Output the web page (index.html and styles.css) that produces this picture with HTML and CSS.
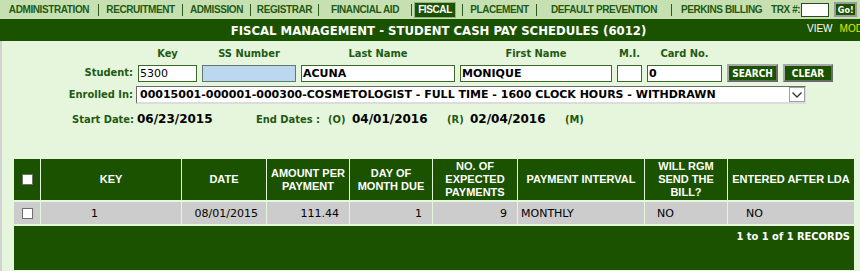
FILE: index.html
```html
<!DOCTYPE html>
<html>
<head>
<meta charset="utf-8">
<title>Fiscal Management - Student Cash Pay Schedules</title>
<link rel="stylesheet" href="styles.css">
</head>
<body>
<div class="nav">
  <div class="nav-item first">ADMINISTRATION</div>
  <div class="nav-item">RECRUITMENT</div>
  <div class="nav-item">ADMISSION</div>
  <div class="nav-item">REGISTRAR</div>
  <div class="nav-item">FINANCIAL AID</div>
  <div class="nav-item fiscal"><span class="tab">FISCAL</span></div>
  <div class="nav-item">PLACEMENT</div>
  <div class="nav-item">DEFAULT PREVENTION</div>
  <div class="nav-item">PERKINS BILLING</div>
  <div class="trx"><span class="trx-label">TRX #:</span><input class="trx-input" type="text"><button class="go">Go!</button></div>
</div>
<div class="titlebar">
  <div class="title">FISCAL MANAGEMENT - STUDENT CASH PAY SCHEDULES (6012)</div>
  <div class="mode"><span>VIEW</span><span class="mod">MOD</span></div>
</div>
<div class="main">
  <div class="form">
    <div></div>
    <div class="colhead">Key</div>
    <div class="colhead">SS Number</div>
    <div class="colhead">Last Name</div>
    <div class="colhead">First Name</div>
    <div class="colhead">M.I.</div>
    <div class="colhead">Card No.</div>
    <div></div>
    <div></div>

    <div class="label">Student:</div>
    <input class="field" type="text" value="5300">
    <input class="field ssn" type="text" value="">
    <input class="field bold" type="text" value="ACUNA">
    <input class="field bold" type="text" value="MONIQUE">
    <input class="field" type="text" value="">
    <input class="field bold" type="text" value="0">
    <button class="btn">SEARCH</button>
    <button class="btn">CLEAR</button>

    <div class="label">Enrolled In:</div>
    <div class="select">
      <span class="select-text">00015001-000001-000300-COSMETOLOGIST - FULL TIME - 1600 CLOCK HOURS - WITHDRAWN</span>
      <span class="arrow"><svg width="12" height="8" viewBox="0 0 12 8"><polyline points="1.5,1.5 6,6 10.5,1.5" fill="none" stroke="#333" stroke-width="1.3"/></svg></span>
    </div>

    <div class="dates">
      <span class="label">Start Date:</span>
      <span class="dval">06/23/2015</span>
      <span class="dlabel">End Dates :</span>
      <span class="dlabel">(O)</span>
      <span class="dval">04/01/2016</span>
      <span class="dlabel">(R)</span>
      <span class="dval">02/04/2016</span>
      <span class="dlabel">(M)</span>
    </div>
  </div>

  <table class="grid">
    <colgroup>
      <col class="w26"><col class="w140"><col class="w84"><col class="w82"><col class="w82"><col class="w84"><col class="w126"><col class="w82"><col class="w126">
    </colgroup>
    <thead>
      <tr>
        <th><span class="cb"></span></th>
        <th>KEY</th>
        <th>DATE</th>
        <th>AMOUNT PER PAYMENT</th>
        <th>DAY OF MONTH DUE</th>
        <th>NO. OF EXPECTED PAYMENTS</th>
        <th>PAYMENT INTERVAL</th>
        <th>WILL RGM SEND THE BILL?</th>
        <th>ENTERED AFTER LDA</th>
      </tr>
    </thead>
    <tbody>
      <tr>
        <td><span class="cb"></span></td>
        <td class="c-key">1</td>
        <td class="c-date">08/01/2015</td>
        <td class="c-num">111.44</td>
        <td class="c-num">1</td>
        <td class="c-num">9</td>
        <td class="c-int">MONTHLY</td>
        <td class="c-will">NO</td>
        <td class="c-lda">NO</td>
      </tr>
    </tbody>
    <tfoot>
      <tr><td class="foot" colspan="9">1 to 1 of 1 RECORDS</td></tr>
    </tfoot>
  </table>
</div>
</body>
</html>
```
FILE: styles.css
```css
* { box-sizing: border-box; }
html, body { margin: 0; padding: 0; }
body {
  width: 860px;
  height: 271px;
  overflow: hidden;
  background: #e6f6dc;
  font-family: "DejaVu Sans", sans-serif;
}

/* top navigation */
.nav {
  display: grid;
  grid-template-columns: 98px 84px 68px 68px 93px 51px 74px 135px 100px 1fr;
  align-items: center;
  height: 19px;
  background: #c6e0b2;
}
.nav-item {
  height: 12px;
  line-height: 12px;
  display: flex;
  align-items: center;
  justify-content: center;
  border-left: 1px solid #2b5e1c;
  color: #1f5a12;
  font: bold 10px "Liberation Sans", sans-serif;
  letter-spacing: -0.4px;
  white-space: nowrap;
}
.nav-item.first { border-left: none; }
.nav-item.fiscal { justify-content: flex-start; padding-left: 2px; }
.tab {
  display: block;
  width: 42px;
  height: 16px;
  line-height: 14px;
  background: #1a5200;
  color: #fff;
  border: 1px solid #8fb67e;
  text-align: center;
}
.trx {
  display: flex;
  align-items: center;
  color: #1f5a12;
  font: bold 10px "Liberation Sans", sans-serif;
  letter-spacing: -0.4px;
  white-space: nowrap;
}
.trx-input {
  width: 28px;
  height: 14px;
  margin: 0 0 0 1px;
  padding: 0;
  border: 1px solid #2b4a20;
  background: #fff;
}
.go {
  margin-left: 5px;
  width: 23px;
  height: 15px;
  padding: 0;
  background: #1a5200;
  color: #fff;
  font: bold 9px "DejaVu Sans Condensed", "DejaVu Sans", sans-serif;
  font-stretch: condensed;
  letter-spacing: 0;
  border: 2px solid #9a9a9a;
}

/* title bar */
.titlebar {
  display: grid;
  grid-template-columns: 807px auto;
  align-items: center;
  height: 22px;
  background: #1a5200;
}
.title {
  padding-left: 70px;
  text-align: center;
  color: #fff;
  font: bold 13px "DejaVu Sans Condensed", "DejaVu Sans", sans-serif;
  font-stretch: condensed;
  white-space: nowrap;
}
.mode {
  white-space: nowrap;
  color: #fff;
  font: 10px "Liberation Sans", sans-serif;
  margin-top: -3px;
}
.mod { color: #e8e800; margin-left: 7px; }

/* main area */
.main {
  height: 230px;
  overflow: hidden;
  border-left: 2px solid #d2d2d2;
}
.form {
  display: grid;
  grid-template-columns: 131px 59px 94px 154px 152px 25px 75px 51px 50px;
  column-gap: 5px;
  row-gap: 4px;
  padding-top: 7px;
  align-items: center;
}
.colhead, .label, .dlabel {
  color: #1f5a12;
  font: bold 11px "DejaVu Sans Condensed", "DejaVu Sans", sans-serif;
  font-stretch: condensed;
  line-height: 12px;
  white-space: nowrap;
}
.colhead { text-align: center; }
.label { text-align: right; }
.field {
  height: 17px;
  margin: 0;
  padding: 0 1px;
  border: 1px solid #3a6a2a;
  background: #fff;
  color: #000;
  font: 11px "DejaVu Sans", sans-serif;
  outline: none;
}
.field.bold { font-weight: bold; }
.field.ssn { background: #bcd8f0; border-color: #5f7a6a; }
.btn {
  height: 18px;
  margin: 0;
  padding: 0;
  background: #1a5200;
  color: #fff;
  font: bold 10px "DejaVu Sans Condensed", "DejaVu Sans", sans-serif;
  font-stretch: condensed;
  border: 2px solid;
  border-color: #a8a8a8 #6a6a6a #6a6a6a #a8a8a8;
}
.select {
  grid-column: 2 / -1;
  justify-self: start;
  width: 670px;
  margin-left: -2px;
  height: 18px;
  display: flex;
  align-items: center;
  background: #fff;
  border-style: solid;
  border-width: 1px 1px 2px 1px;
  border-color: #6a6a6a #dcdcdc #dcdcdc #6a6a6a;
  padding-left: 3px;
  color: #000;
  font: bold 11px "DejaVu Sans", sans-serif;
  white-space: nowrap;
}
.arrow {
  margin-left: auto;
  width: 16px;
  height: 15px;
  display: flex;
  align-items: center;
  justify-content: center;
  border: 1px solid #a0a0a0;
  background: #fff;
}
.dates {
  grid-column: 1 / -1;
  display: grid;
  grid-template-columns: 135px 119px 72px 24px 95px 23px 95px auto;
  align-items: baseline;
  margin-top: 4px;
  line-height: 14px;
}
.dates .label { padding-right: 3px; }
.dval {
  color: #000;
  font: bold 12px "DejaVu Sans", sans-serif;
  white-space: nowrap;
}

/* results table */
.grid {
  margin: 31px 0 0 11px;
  width: 842px;
  table-layout: fixed;
  border-collapse: separate;
  border-spacing: 1px 2px;
}
.w26 { width: 26px; }
.w140 { width: 140px; }
.w84 { width: 84px; }
.w82 { width: 82px; }
.w126 { width: 126px; }
.grid th {
  height: 41px;
  padding: 0 2px;
  background: #1a5200;
  color: #fff;
  font: bold 11px "Liberation Sans", sans-serif;
  line-height: 13px;
  text-align: center;
  vertical-align: middle;
}
.grid td {
  height: 22px;
  padding: 0;
  background: #cccccc;
  color: #000;
  font: 11px "DejaVu Sans", sans-serif;
  white-space: nowrap;
}
.cb {
  display: block;
  width: 11px;
  height: 11px;
  margin: 0 auto;
  background: #fff;
  border: 1px solid #6e6e6e;
}
.grid td.c-key { padding-left: 50px; }
.grid td.c-date { text-align: right; padding-right: 8px; }
.grid td.c-num { text-align: right; padding-right: 10px; }
.grid td.c-int { padding-left: 3px; }
.grid td.c-will { padding-left: 12px; }
.grid td.c-lda { padding-left: 18px; }
.grid td.foot {
  height: 44px;
  padding: 4px 4px 0 0;
  vertical-align: top;
  text-align: right;
  background: #1a5200;
  color: #fff;
  font: bold 11px "DejaVu Sans Condensed", "DejaVu Sans", sans-serif;
  font-stretch: condensed;
}
```
